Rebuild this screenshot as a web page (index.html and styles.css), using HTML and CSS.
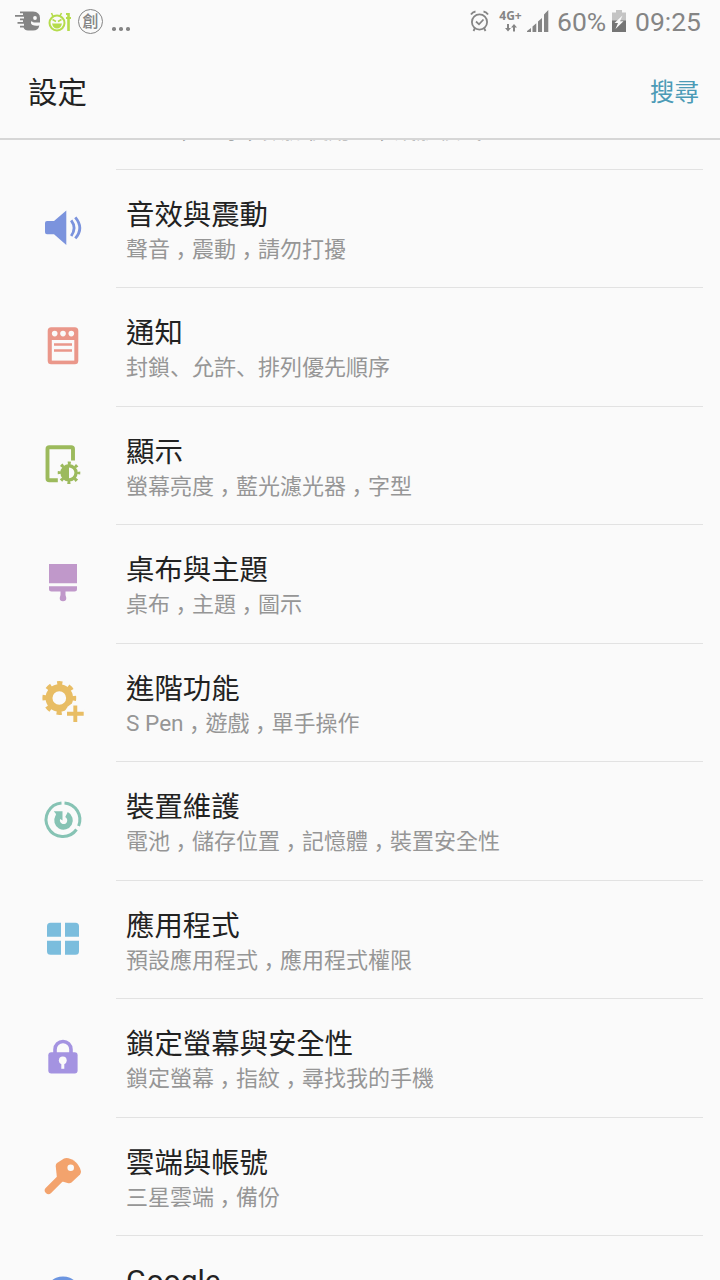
FILE: index.html
```html
<!DOCTYPE html>
<html lang="zh-Hant">
<head>
<meta charset="utf-8">
<title>設定</title>
<link rel="stylesheet" href="styles.css">
</head>
<body>
<div class="screen">
  <div class="status">
    <div class="status-left">
      <svg class="si-head" width="26" height="22" viewBox="0 0 26 22" fill="#858585"><path d="M5 1.500H18Q25 2 25 8V12.500H19.500Q18 12.500 16.500 11 15 13.500 17.500 15 20 16.300 24.300 15.500 23.500 20.500 18 20.500H13Q9.500 20.500 8.500 17.500H5V15.800H9V13.800H2.500V12H8V10.200H5V8.500H9V6.700H0V5H8V3.200H5Z"/><circle cx="20" cy="8" r="1.900" fill="#fafafa"/></svg>
      <svg class="si-face" width="24" height="22" viewBox="0 0 24 22" fill="none" stroke="#b5dc4c" stroke-width="2"><circle cx="9" cy="12" r="7.500"/><path d="M5 5.500 3.500 2M12 5 13.500 2" stroke-width="1.600"/><path d="M4.500 8.500 8 10.500M13.500 8.500 10 10.500" stroke-width="1.500"/><path d="M4 12.500H14Q13 17.500 9 17.500T4 12.500Z" fill="#b5dc4c" stroke="none"/><path d="M20.500 2V20" stroke-width="2.600"/><path d="M18 3H21M18 7H23" stroke-width="1.800"/></svg>
      <div class="badge">創</div>
      <div class="dots"><i></i><i></i><i></i></div>
    </div>
    <div class="status-right">
      <svg class="si-alarm" width="20" height="22" viewBox="0 0 20 22" fill="none" stroke="#858585" stroke-width="1.800"><circle cx="9.500" cy="12" r="7.600"/><path d="M6 11.500 9 14.300 13.500 9.500M1 4.500Q2.500 2 5.500 1.500M18 4.500Q16.500 2 13.500 1.500M5 18 3.500 21M14 18 15.500 21"/></svg>
      <div class="net"><span>4G+</span><svg width="12" height="8" viewBox="0 0 12 8" fill="#858585"><path d="M2 0H4V4H6L3 7.500 0 4H2ZM8 7.500H10V3.500H12L9 0 6 3.500H8Z"/></svg></div>
      <svg class="si-signal" width="22" height="22" viewBox="0 0 22 22" fill="#858585"><path d="M0 22V21L4 18V22ZM5.500 22V16.500L9.300 13.200V22ZM11 22V11.500L15 8V22ZM17 22V4.500L21.300 0V22Z"/></svg>
      <span class="pct">60%</span>
      <svg class="si-batt" width="14" height="22" viewBox="0 0 14 22"><path d="M0 2.500H4V0H10V2.500H14V11H0Z" fill="#c4c4c4"/><path d="M0 10.500H14V22H0Z" fill="#757575"/><path d="M10.500 5.500 2.500 13H6L3.500 19 11.500 11.300H8Z" fill="#fafafa"/></svg>
      <span class="clock">09:25</span>
    </div>
  </div>
  <div class="header"><h1>設定</h1><a class="search">搜尋</a></div>
  <div class="viewport">
    <div class="list">
      <div class="row"><div class="icon"></div><div class="text"><div class="title"></div><div class="sub">Wi-Fi<span class="comma" lang="zh-Hans">，</span>藍牙<span class="comma" lang="zh-Hans">，</span>數據使用量<span class="comma" lang="zh-Hans">，</span>飛航模式</div></div></div>

      <div class="row"><div class="icon"><svg width="44" height="44" viewBox="0 0 44 44"><path d="M6 15H13L25.300 4.500V39.100L13 28.300H6Q4 28.300 4 26.300V17Q4 15 6 15Z" fill="#7b93dd"/><path d="M30.200 14.300Q36 22 30.200 30M34.300 11.300Q43.300 22 34.300 32.300" fill="none" stroke="#7b93dd" stroke-width="2.800"/></svg></div><div class="text"><div class="title">音效與震動</div><div class="sub">聲音<span class="comma" lang="zh-Hans">，</span>震動<span class="comma" lang="zh-Hans">，</span>請勿打擾</div></div></div>

      <div class="row"><div class="icon"><svg width="44" height="44" viewBox="0 0 44 44"><rect x="6.700" y="3.300" width="30.600" height="37" rx="3.500" fill="#ea978a"/><g fill="#fafafa"><circle cx="13.700" cy="9.600" r="2.800"/><circle cx="22" cy="9.600" r="2.800"/><circle cx="30.300" cy="9.600" r="2.800"/><rect x="10.800" y="16" width="22.500" height="20.600"/></g><path d="M13 20.500H31M13 26.500H31" stroke="#ea978a" stroke-width="2.700"/></svg></div><div class="text"><div class="title">通知</div><div class="sub">封鎖<span class="pause" lang="zh-Hans">、</span>允許<span class="pause" lang="zh-Hans">、</span>排列優先順序</div></div></div>

      <div class="row"><div class="icon"><svg width="44" height="44" viewBox="0 0 44 44"><path d="M32 17.500V6Q32 4.200 30.200 4.200H8.300Q6.500 4.200 6.500 6V35.500Q6.500 37.300 8.300 37.300H16.800" fill="none" stroke="#9cba5c" stroke-width="3.900"/><circle cx="28" cy="29.800" r="9.700" fill="none" stroke="#9cba5c" stroke-width="3.200" stroke-dasharray="3 4.618" stroke-dashoffset="1.500"/><circle cx="28" cy="29.800" r="8.700" fill="#9cba5c"/><path d="M28 24.400A5.400 5.400 0 0 1 28 35.200Z" fill="#fafafa"/></svg></div><div class="text"><div class="title">顯示</div><div class="sub">螢幕亮度<span class="comma" lang="zh-Hans">，</span>藍光濾光器<span class="comma" lang="zh-Hans">，</span>字型</div></div></div>

      <div class="row"><div class="icon"><svg width="44" height="44" viewBox="0 0 44 44" fill="#c098ca"><path d="M8 3H36V22.300H8ZM8 25.300H36V28Q36 30.500 33.500 30.500H24.500V34L25.300 37A3.300 3.300 0 0 1 18.700 37L19.500 34V30.500H10.500Q8 30.500 8 28Z"/></svg></div><div class="text"><div class="title">桌布與主題</div><div class="sub">桌布<span class="comma" lang="zh-Hans">，</span>主題<span class="comma" lang="zh-Hans">，</span>圖示</div></div></div>

      <div class="row"><div class="icon"><svg width="44" height="44" viewBox="0 0 44 44"><g fill="none" stroke="#e8bd64"><circle cx="18.300" cy="18" r="10.300" stroke-width="6.900"/><circle cx="18.300" cy="18" r="14.700" stroke-width="4.400" stroke-dasharray="5.200 6.345" stroke-dashoffset="2.600"/></g><circle cx="34.300" cy="33.800" r="10.500" fill="#fafafa"/><path d="M26 33.800H42.700M34.300 25.500V42" stroke="#e8bd64" stroke-width="3.900"/></svg></div><div class="text"><div class="title">進階功能</div><div class="sub"><span class="latin">S Pen</span><span class="comma" lang="zh-Hans">，</span>遊戲<span class="comma" lang="zh-Hans">，</span>單手操作</div></div></div>

      <div class="row"><div class="icon"><svg width="44" height="44" viewBox="0 0 44 44" fill="none" stroke="#86c3b4"><path d="M23.500 4.900A16.800 16.800 0 0 1 37.600 28M35.500 31.500A16.800 16.800 0 1 1 20.500 4.900" stroke-width="3"/><path d="M25.500 16.600A6.500 6.500 0 1 1 17 19" stroke-width="5.600"/><path d="M12.800 13.300H21.500V22.500L18.500 20.500 14.500 19 15 16Z" fill="#86c3b4" stroke="none"/></svg></div><div class="text"><div class="title">裝置維護</div><div class="sub">電池<span class="comma" lang="zh-Hans">，</span>儲存位置<span class="comma" lang="zh-Hans">，</span>記憶體<span class="comma" lang="zh-Hans">，</span>裝置安全性</div></div></div>

      <div class="row"><div class="icon"><svg width="44" height="44" viewBox="0 0 44 44" fill="#7bbddd"><path d="M9.500 5.800H20V19.800H6V9.300Q6 5.800 9.500 5.800ZM24 5.800H34.500Q38 5.800 38 9.300V19.800H24ZM6 23.800H20V37.800H9.500Q6 37.800 6 34.300ZM24 23.800H38V34.300Q38 37.800 34.500 37.800H24Z"/></svg></div><div class="text"><div class="title">應用程式</div><div class="sub">預設應用程式<span class="comma" lang="zh-Hans">，</span>應用程式權限</div></div></div>

      <div class="row"><div class="icon"><svg width="44" height="44" viewBox="0 0 44 44"><path d="M14 19V14.500A8 8 0 0 1 30 14.500V19" fill="none" stroke="#a493e1" stroke-width="3.600"/><rect x="7.300" y="17.300" width="29.300" height="21.300" rx="3" fill="#a493e1"/><circle cx="21.800" cy="25.300" r="3.900" fill="#fafafa"/><path d="M21.800 26V33.800" stroke="#fafafa" stroke-width="3"/></svg></div><div class="text"><div class="title">鎖定螢幕與安全性</div><div class="sub">鎖定螢幕<span class="comma" lang="zh-Hans">，</span>指紋<span class="comma" lang="zh-Hans">，</span>尋找我的手機</div></div></div>

      <div class="row"><div class="icon"><svg width="44" height="44" viewBox="0 0 44 44"><path d="M7.500 36.300 20 23.800" stroke="#f3a36d" stroke-width="7.400" stroke-linecap="round"/><path d="M16 9 23 4.500Q25 3.500 27.500 4.200 33.500 6 36.500 10 39.500 14 40 17.500 40 19 39 20.500L30.500 28.500Q29 29.700 26.500 29L20.500 27.300 15.800 22.500 14.700 12Q14.700 10 16 9Z" fill="#f3a36d"/><circle cx="29.700" cy="13.800" r="3.300" fill="#fafafa"/></svg></div><div class="text"><div class="title">雲端與帳號</div><div class="sub">三星雲端<span class="comma" lang="zh-Hans">，</span>備份</div></div></div>

      <div class="row"><div class="icon"><svg width="44" height="44" viewBox="0 0 44 44"><circle cx="22" cy="22.500" r="18" fill="#6c95e0"/></svg></div><div class="text"><div class="title title-latin">Google</div><div class="sub"></div></div></div>
    </div>
  </div>
</div>
</body>
</html>
```
FILE: styles.css
```css
* { box-sizing: border-box; }
body { margin: 0; background: #fafafa; font-family: Roboto, "Noto Sans CJK TC", sans-serif; color: #222; }
.screen { width: 720px; height: 1280px; overflow: hidden; display: flex; flex-direction: column; }
svg { display: block; flex: none; }

.status { height: 44px; flex: none; display: flex; justify-content: space-between; padding: 0 19px 0 15px; color: #858585; }
.status-left, .status-right { display: flex; align-items: center; height: 43px; }
.si-head { margin-top: -1px; }
.si-face { margin-left: 7px; }
.badge { width: 25px; height: 25px; margin-left: 6px; border: 1.500px solid #858585; border-radius: 50%; font: 500 16px/21px "Noto Sans CJK TC", sans-serif; display: flex; justify-content: center; }
.dots { display: flex; gap: 3.500px; margin: 15px 0 0 9px; }
.dots i { width: 3.500px; height: 3.500px; border-radius: 50%; background: #858585; }
.si-alarm { margin-top: -1px; }
.net { width: 23px; margin: 0 0 0 9px; display: flex; flex-direction: column; align-items: center; gap: 3px; font: 700 12px/10px "Noto Sans", sans-serif; }
.si-signal { margin-left: 5px; margin-top: -1px; }
.pct { font-size: 26.500px; line-height: 43px; margin-left: 8px; width: 55px; }
.si-batt { margin-top: -1px; }
.clock { font-size: 26.500px; line-height: 43px; margin-left: 9px; }

.header { height: 96px; flex: none; display: flex; align-items: center; justify-content: space-between; padding: 3px 21px 0 28px; border-bottom: 2px solid #d6d6d6; }
.header h1 { margin: 0; font-size: 29.500px; font-weight: 400; line-height: 44px; }
.search { font-size: 24.500px; line-height: 36px; color: #4c9bb6; }

.viewport { flex: 1; min-height: 0; overflow: hidden; }
.list { margin-top: -89px; }
.row { height: 118.500px; display: flex; }
.icon { width: 115.500px; padding: 36.200px 0 0 41px; flex: none; }
.text { width: 587px; padding: 28px 0 0 10.500px; border-bottom: 1px solid #e2e2e2; white-space: nowrap; }
.title { height: 35px; font-size: 28.400px; line-height: 36px; }
.title-latin { font-size: 30px; line-height: 33px; }
.sub { height: 33px; font-size: 22px; line-height: 33px; color: #969696; }
.latin { font-size: 22.600px; }
.comma { display: inline-block; width: 22px; text-indent: 5.500px; font-family: "Noto Sans CJK SC", sans-serif; line-height: 1; }
.pause { font-family: "Noto Sans CJK SC", sans-serif; line-height: 1; }
```
